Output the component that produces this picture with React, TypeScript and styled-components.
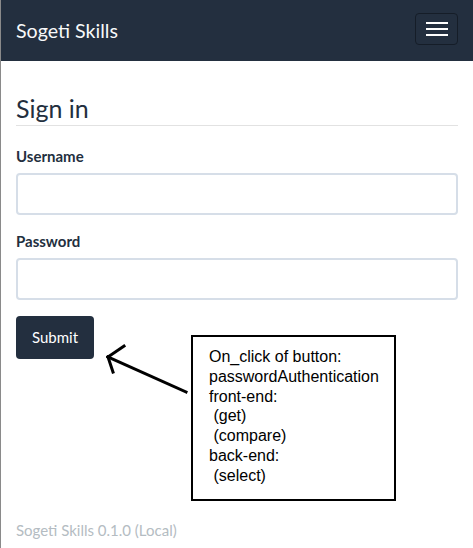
import React from "react";
import styled, { createGlobalStyle } from "styled-components";

const GlobalStyle = createGlobalStyle`
  html, body {
    margin: 0;
    padding: 0;
    background: #ffffff;
  }
  body {
    font-family: Lato, "Noto Sans", sans-serif;
    font-size: 15px;
    color: #232f3e;
  }
  * { box-sizing: border-box; }
`;

const Page = styled.div`
  position: relative;
  min-height: 548px;
  display: flex;
  flex-direction: column;
  border-left: 1px solid #8a8a8a;
`;

const Navbar = styled.nav`
  height: 61px;
  background: #232f3f;
  display: flex;
  align-items: center;
  justify-content: space-between;
  padding: 0 15px 0 15px;
`;

const Brand = styled.span`
  font-family: Lato, sans-serif;
  font-size: 19.6px;
  line-height: 30px;
  color: #f8f9fa;
  margin-top: 0px;
`;

const Toggler = styled.button`
  width: 43px;
  height: 32px;
  margin-top: -3px;
  margin-right: 0px;
  background: transparent;
  border: 1px solid #151d28;
  border-radius: 4px;
  padding: 0;
  display: flex;
  flex-direction: column;
  align-items: center;
  justify-content: center;
  gap: 4px;
`;

const Bar = styled.span`
  display: block;
  width: 22px;
  height: 2px;
  background: #ffffff;
`;

const Main = styled.main`
  padding: 32px 15px 0 15px;
  display: flex;
  flex-direction: column;
`;

const Legend = styled.h2`
  margin: 0;
  font-family: Lato, sans-serif;
  font-weight: 400;
  font-size: 25px;
  line-height: 30px;
  color: #232f3e;
  padding-bottom: 2px;
  border-bottom: 1px solid #e2e2e2;
`;

const Form = styled.form`
  display: flex;
  flex-direction: column;
  margin-top: 19px;
`;

const Group = styled.div`
  display: flex;
  flex-direction: column;
  margin-bottom: 15px;
`;

const Label = styled.label`
  font-family: Lato, sans-serif;
  font-weight: 700;
  font-size: 15px;
  line-height: 22px;
  color: #232f3e;
  margin-bottom: 6px;
`;

const Input = styled.input`
  height: 42px;
  width: 100%;
  border: 2px solid #d6dee8;
  border-radius: 4px;
  background: #ffffff;
  padding: 8px 12px;
  font-family: Lato, sans-serif;
  font-size: 15px;
  outline: none;
`;

const SubmitButton = styled.button`
  align-self: flex-start;
  margin-top: 1px;
  height: 43px;
  padding: 0 16px 2px 16px;
  background: #232f3f;
  color: #ffffff;
  border: none;
  border-radius: 4px;
  font-family: Lato, sans-serif;
  font-size: 15px;
  line-height: 22px;
`;

const Footer = styled.footer`
  margin-top: auto;
  padding: 0 15px 7px 15px;
  font-family: Lato, sans-serif;
  font-size: 15px;
  line-height: 22px;
  color: #b4bcc2;
`;

const Note = styled.div`
  position: absolute;
  left: 190px;
  top: 335px;
  width: 205px;
  height: 166px;
  border: 2px solid #000000;
  background: #ffffff;
  padding: 10px 0 0 16px;
  font-family: "Liberation Sans", Arial, sans-serif;
  font-size: 16px;
  line-height: 19.8px;
  color: #000000;
  white-space: pre;
`;

const Arrow = styled.svg`
  position: absolute;
  left: 95px;
  top: 335px;
  width: 100px;
  height: 70px;
  overflow: visible;
`;

const noteLines = [
  "On_click of button:",
  "passwordAuthentication",
  "front-end:",
  " (get)",
  " (compare)",
  "back-end:",
  " (select)",
];

export default function App() {
  return (
    <>
      <GlobalStyle />
      <Page>
        <Navbar>
          <Brand>Sogeti Skills</Brand>
          <Toggler type="button" aria-label="Toggle navigation">
            <Bar />
            <Bar />
            <Bar />
          </Toggler>
        </Navbar>
        <Main>
          <Legend>Sign in</Legend>
          <Form onSubmit={(e) => e.preventDefault()}>
            <Group>
              <Label htmlFor="username">Username</Label>
              <Input id="username" type="text" />
            </Group>
            <Group>
              <Label htmlFor="password">Password</Label>
              <Input id="password" type="password" />
            </Group>
            <SubmitButton type="submit">Submit</SubmitButton>
          </Form>
        </Main>
        <Footer>Sogeti Skills 0.1.0 (Local)</Footer>
        <Arrow viewBox="95 335 100 70">
          <g stroke="#000" strokeWidth="3" strokeLinecap="square" fill="none">
            <line x1="185" y1="392" x2="107" y2="357" />
            <line x1="107" y1="357" x2="123" y2="346" />
            <line x1="107" y1="357" x2="112" y2="372" />
          </g>
        </Arrow>
        <Note>{noteLines.join("\n")}</Note>
      </Page>
    </>
  );
}
